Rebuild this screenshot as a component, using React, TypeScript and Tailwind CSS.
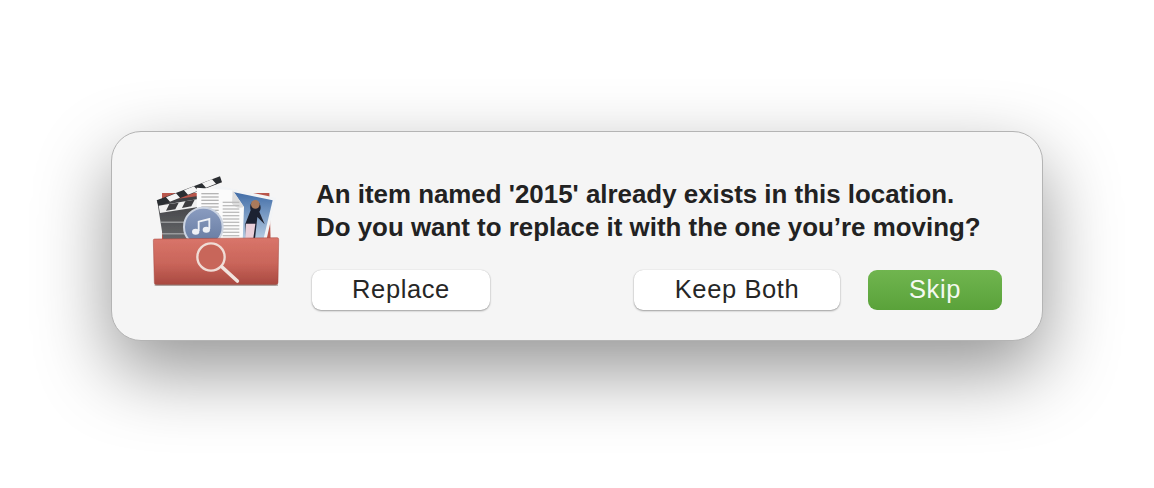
const FONT = "font-['Liberation_Sans',Arial,sans-serif]";

function FolderIcon() {
  const leftLines = [84, 94, 104, 114, 124, 134, 144];
  const rightLines = [110, 120, 130, 140, 150, 160, 170, 180, 190, 200, 210];
  return (
    <svg viewBox="0 0 450 390" className="w-[150px] h-[130px] shrink-0">
      <defs>
        <linearGradient id="front" x1="0" y1="0" x2="0" y2="1">
          <stop offset="0" stopColor="#d9756a" />
          <stop offset="0.55" stopColor="#c9655a" />
          <stop offset="1" stopColor="#a84840" />
        </linearGradient>
        <linearGradient id="sky" x1="0" y1="0" x2="0" y2="1">
          <stop offset="0" stopColor="#3f6ba6" />
          <stop offset="1" stopColor="#b7cde3" />
        </linearGradient>
        <linearGradient id="disc" x1="0" y1="0" x2="0" y2="1">
          <stop offset="0" stopColor="#8a9cc0" />
          <stop offset="1" stopColor="#64799f" />
        </linearGradient>
        <linearGradient id="board" x1="0" y1="0" x2="0" y2="1">
          <stop offset="0" stopColor="#3c3d40" />
          <stop offset="1" stopColor="#67686b" />
        </linearGradient>
        <filter id="soft">
          <feGaussianBlur stdDeviation="1.2" />
        </filter>
      </defs>
      <g filter="url(#soft)">
        {/* back of the folder */}
        <path d="M66 84 L388 84 L392 230 L66 230 Z" fill="#b9564c" />
        {/* clapperboard */}
        <path d="M52 110 L180 92 L180 225 L70 225 Z" fill="url(#board)" />
        <path d="M50 106 L240 34 L246 52 L56 124 Z" fill="#2c2d30" />
        <path d="M78 97 L108 85 L120 98 L90 110 Z M132 76 L162 64 L174 77 L144 89 Z M186 55 L216 43 L228 56 L198 68 Z" fill="#f4f4f4" />
        <path d="M56 122 L175 102 L175 126 L60 144 Z" fill="#f0f0f0" />
        <path d="M88 117 L116 113 L106 133 L78 137 Z M136 109 L164 104 L154 124 L126 129 Z" fill="#3c3d40" />
        <rect x="62" y="170" width="108" height="3" fill="#b5b6b8" />
        <rect x="66" y="205" width="105" height="3" fill="#b5b6b8" />
        {/* photo */}
        <path d="M225 60 L408 98 L378 230 L225 230 Z" fill="#f2f4f6" />
        <path d="M275 80 L398 106 L370 224 L275 224 Z" fill="url(#sky)" />
        <path d="M345 108 C362 108 366 130 358 140 L374 178 L352 156 L345 222 L318 218 L316 176 L332 136 C328 122 332 110 345 108 Z" fill="#1f2230" />
        <path d="M318 176 L346 176 L340 220 L316 220 Z" fill="#e9cfd9" />
        <circle cx="346" cy="118" r="13" fill="#a97a5c" />
        {/* paper */}
        <path d="M170 68 L278 76 L312 126 L308 230 L172 230 Z" fill="#fbfbfb" />
        <path d="M278 76 L276 116 Q292 134 312 126 Z" fill="#dddddd" />
        {leftLines.map((y) => (
          <rect key={y} x="184" y={y} width="52" height="4" fill="#b4b4b4" />
        ))}
        {rightLines.map((y) => (
          <rect key={y} x="248" y={y} width="50" height="4" fill="#bdbdbd" />
        ))}
        {/* music disc */}
        <circle cx="190" cy="186" r="58" fill="url(#disc)" stroke="#ccd4e2" strokeWidth="6" />
        <path d="M176 198 L176 170 L208 162 L208 192" fill="none" stroke="#eef1f6" strokeWidth="5.5" />
        <ellipse cx="167" cy="200" rx="11" ry="9" fill="#eef1f6" />
        <ellipse cx="199" cy="194" rx="11" ry="9" fill="#eef1f6" />
        {/* front of the folder */}
        <path
          d="M44 222 L412 218 Q416 218 416 224 L414 352 Q414 360 406 360 L50 360 Q43 360 43 352 L40 226 Q40 222 44 222 Z"
          fill="url(#front)"
          stroke="#a5453d"
          strokeWidth="1.5"
        />
        <rect x="44" y="358" width="370" height="5" fill="#8e8580" opacity="0.6" />
        {/* magnifier */}
        <circle cx="213" cy="276" r="41" fill="#c8665a" stroke="#f0dcd6" strokeWidth="7" />
        <path d="M246 306 L292 348" stroke="#f1e4df" strokeWidth="11" strokeLinecap="round" />
      </g>
    </svg>
  );
}

function DialogButton({ label, className }: { label: string; className: string }) {
  return (
    <button
      className={`h-10 rounded-[9px] text-[25.5px] leading-none tracking-[0.6px] ${className}`}
    >
      {label}
    </button>
  );
}

export default function App() {
  return (
    <div className={`h-[488px] w-[1154px] overflow-hidden bg-white pt-[131px] pl-[111px] ${FONT}`}>
      <div className="flex h-[210px] w-[932px] rounded-[30px] border border-[#b4b4b4] bg-[#f5f5f5] pt-[33px] pl-[28px] shadow-[0_30px_75px_rgba(0,0,0,0.42)]">
        <FolderIcon />
        <div className="ml-[22px] w-[690px]">
          <p className="pl-1 pt-[13px] text-[25.9px] font-bold leading-[33px] text-[#222222]">
            An item named '2015' already exists in this location.
            <br />
            Do you want to replace it with the one you’re moving?
          </p>
          <div className="mt-[26px] flex">
            <DialogButton
              label="Replace"
              className="w-[178px] bg-white text-[#262626] shadow-[0_1px_2px_rgba(0,0,0,0.35),0_0_1px_rgba(0,0,0,0.2)]"
            />
            <DialogButton
              label="Keep Both"
              className="ml-[144px] w-[206px] bg-white text-[#262626] shadow-[0_1px_2px_rgba(0,0,0,0.35),0_0_1px_rgba(0,0,0,0.2)]"
            />
            <DialogButton
              label="Skip"
              className="ml-[28px] w-[134px] bg-gradient-to-b from-[#70b54f] to-[#5aa23a] text-[#f4f9f1]"
            />
          </div>
        </div>
      </div>
    </div>
  );
}
